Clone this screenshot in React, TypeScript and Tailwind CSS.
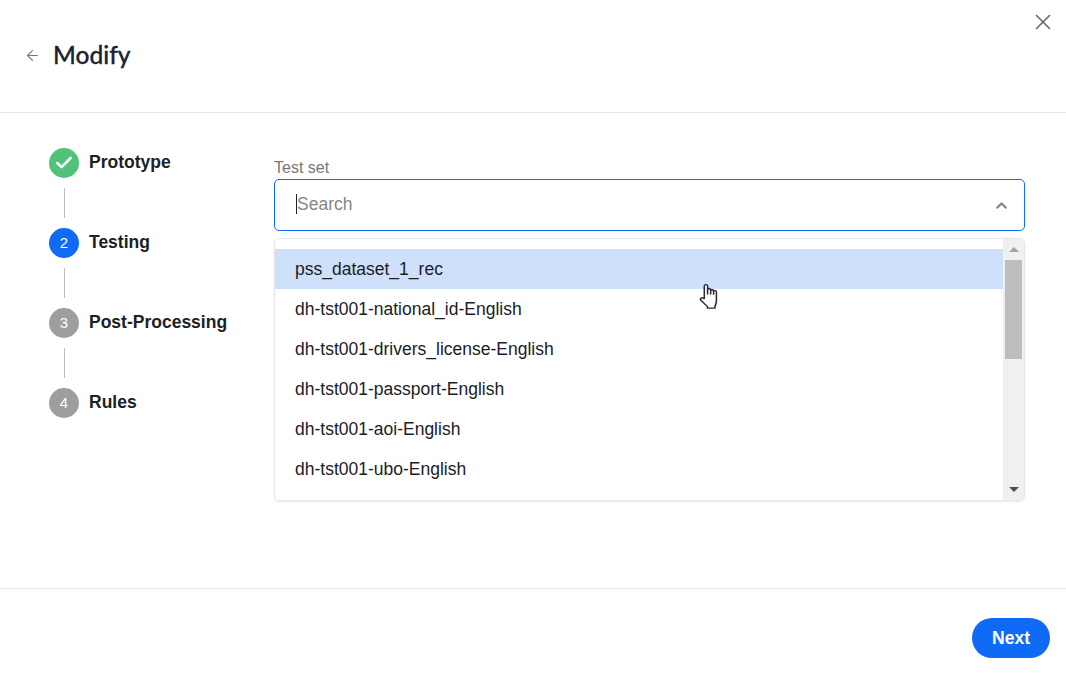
import React from 'react';
import { ArrowLeft, Check, ChevronUp, X } from 'lucide-react';

const steps = [
  { label: 'Prototype', state: 'done' },
  { label: 'Testing', state: 'active' },
  { label: 'Post-Processing', state: 'todo' },
  { label: 'Rules', state: 'todo' },
];

const options = [
  'pss_dataset_1_rec',
  'dh-tst001-national_id-English',
  'dh-tst001-drivers_license-English',
  'dh-tst001-passport-English',
  'dh-tst001-aoi-English',
  'dh-tst001-ubo-English',
];

const HandCursor = () => (
  <svg width="20" height="26" viewBox="0 0 17 25" preserveAspectRatio="none" className="absolute left-[699px] top-[283px]">
    <path
      d="M4.5 15V3a1.4 1.4 0 0 1 2.8 0v7.5V6.6a1.3 1.3 0 0 1 2.6 0v4V7.4a1.3 1.3 0 0 1 2.5 0v3.4V8.6a1.2 1.2 0 0 1 2.4 0v8.6c0 2 -.4 3.4 -1.2 5v2H7.2v-1.5L1.6 16.6c-1.2 -1.4 .6 -3.2 2 -2z"
      fill="#fff"
      stroke="#2a2a3a"
      strokeWidth="1.3"
      strokeLinejoin="round"
    />
  </svg>
);

const App = () => {
  return (
    <div className="relative h-[686px] w-[1066px] overflow-hidden bg-white font-['Liberation_Sans',sans-serif]">
      <button className="absolute right-[10px] top-[9px] text-[#6b6b6b]">
        <X size={26} strokeWidth={1.5} />
      </button>

      <header className="flex h-[113px] items-center border-b border-[#e5e5e5] pb-[2px] pl-[24px]">
        <ArrowLeft size={17} strokeWidth={1.6} className="text-[#77777d]" />
        <h1 className="ml-[12px] font-['Lato',sans-serif] text-[24.5px] font-medium text-[#1a2230] [-webkit-text-stroke:0.3px_#1a2230]">Modify</h1>
      </header>

      <main className="flex h-[476px] border-b border-[#e5e5e5] pl-[49px] pt-[35px]">
        <ol className="w-[225px] shrink-0">
          {steps.map((step, i) => (
            <li key={step.label}>
              <div className="flex h-[30px] items-start">
                <span
                  className={
                    step.state === 'done'
                      ? 'flex size-[30px] items-center justify-center rounded-full bg-[#52c278] text-white'
                      : step.state === 'active'
                        ? 'flex size-[30px] items-center justify-center rounded-full bg-[#0f6bf5] text-[15px] text-white'
                        : 'flex size-[30px] items-center justify-center rounded-full bg-[#9e9e9e] text-[15px] text-white'
                  }
                >
                  {step.state === 'done' ? <Check size={20} strokeWidth={3} /> : i + 1}
                </span>
                <span className="ml-[10px] text-[17.5px] leading-[28px] font-bold text-[#202124]">{step.label}</span>
              </div>
              {i < steps.length - 1 && <div className="my-[10px] ml-[15px] h-[30px] w-px bg-[#bdbdbd]" />}
            </li>
          ))}
        </ol>

        <section className="w-[751px] pt-[11px]">
          <label className="block text-base leading-[20px] -mt-[1px] text-[#777777]">Test set</label>
          <div className="mt-[1px] flex h-[52px] items-center justify-between rounded-[5px] border border-[#0f6bf5] pl-[21px] pr-[14px]">
            <div className="flex items-center pb-[2px]">
              <span className="h-[20px] w-px bg-[#222222]" />
              <span className="text-[17.5px] text-[#85858a]">Search</span>
            </div>
            <ChevronUp size={17} strokeWidth={3} className="text-[#8a8a8a]" />
          </div>

          <div className="mt-[7px] flex h-[263px] overflow-hidden rounded-[5px] border border-[#e6e6e6] shadow-[0_1px_2px_rgba(0,0,0,0.08)]">
            <ul className="flex-1 pt-[10px]">
              {options.map((option, i) => (
                <li
                  key={option}
                  className={
                    i === 0
                      ? 'flex h-[40px] items-center bg-[#cfe0fb] pl-[20px] text-[17.5px] text-[#1c1c24]'
                      : 'flex h-[40px] items-center pl-[20px] text-[17.5px] text-[#1c1c24]'
                  }
                >
                  {option}
                </li>
              ))}
            </ul>
            <div className="flex w-[21px] flex-col items-center bg-[#f0f0f0] pt-[8px]">
              <span className="h-0 w-0 border-x-[5px] border-b-[5px] border-x-transparent border-b-[#a3a3a3]" />
              <span className="mt-[8px] h-[99px] w-[17px] bg-[#bdbdbd]" />
              <span className="mt-auto mb-[8px] h-0 w-0 border-x-[5px] border-t-[5px] border-x-transparent border-t-[#505050]" />
            </div>
          </div>
        </section>
      </main>

      <footer className="flex justify-end pr-[16px] pt-[29px]">
        <button className="h-[40px] w-[78px] rounded-full bg-[#0f6bf5] text-[17.5px] font-bold text-white">Next</button>
      </footer>

      <HandCursor />
    </div>
  );
};

export default App;
